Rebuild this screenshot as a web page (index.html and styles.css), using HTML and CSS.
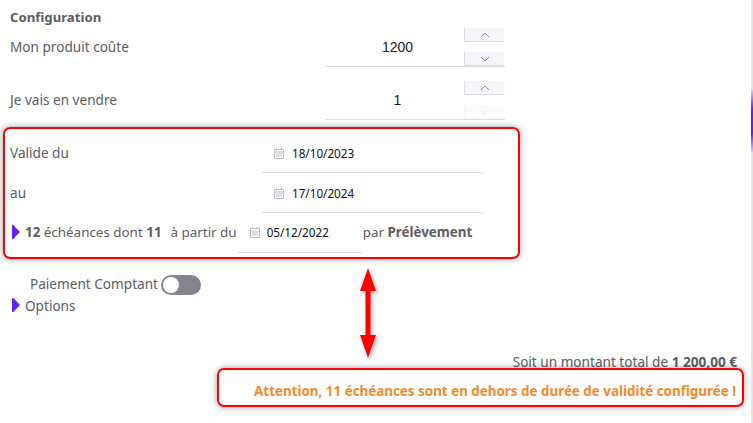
FILE: index.html
```html
<!DOCTYPE html>
<html lang="fr">
<head>
  <meta charset="utf-8">
  <title>Configuration</title>
  <link rel="stylesheet" href="styles.css">
</head>
<body>
  <div class="page">
    <h3 class="title">Configuration</h3>

    <!-- Quantities -->
    <div class="numRow">
      <label class="numLabel">Mon produit coûte</label>
      <div class="numField">
        <span class="numValue">1200</span>
        <div class="stepper">
          <span class="stepBtn"><svg width="10" height="6" viewBox="0 0 10 6"><path d="M1 5 L5 1 L9 5"/></svg></span>
          <span class="stepBtn"><svg width="10" height="6" viewBox="0 0 10 6"><path d="M1 1 L5 5 L9 1"/></svg></span>
        </div>
      </div>
    </div>
    <div class="numRow">
      <label class="numLabel">Je vais en vendre</label>
      <div class="numField">
        <span class="numValue">1</span>
        <div class="stepper">
          <span class="stepBtn"><svg width="10" height="6" viewBox="0 0 10 6"><path d="M1 5 L5 1 L9 5"/></svg></span>
          <span class="stepBtn disabled"><svg width="10" height="6" viewBox="0 0 10 6"><path d="M1 1 L5 5 L9 1"/></svg></span>
        </div>
      </div>
    </div>

    <!-- Dates -->
    <div class="redBox dates">
      <div class="dateRow">
        <label>Valide du</label>
        <div class="dateField">
          <svg class="cal" width="12" height="12" viewBox="0 0 12 12"><path d="M1.5 2.5h9v9h-9zM1.5 5h9M3.5 1v2M8.5 1v2M3 7h6M3 9h6"/></svg>
          <span>18/10/2023</span>
        </div>
      </div>
      <div class="dateRow">
        <label>au</label>
        <div class="dateField">
          <svg class="cal" width="12" height="12" viewBox="0 0 12 12"><path d="M1.5 2.5h9v9h-9zM1.5 5h9M3.5 1v2M8.5 1v2M3 7h6M3 9h6"/></svg>
          <span>17/10/2024</span>
        </div>
      </div>
      <div class="termRow">
        <span class="caret"></span>
        <span class="termText"><b>12</b> échéances dont <b>11</b></span>
        <span class="termFrom">à partir du</span>
        <div class="dateField small">
          <svg class="cal" width="12" height="12" viewBox="0 0 12 12"><path d="M1.5 2.5h9v9h-9zM1.5 5h9M3.5 1v2M8.5 1v2M3 7h6M3 9h6"/></svg>
          <span>05/12/2022</span>
        </div>
        <span class="termPay">par <b>Prélèvement</b></span>
      </div>
    </div>

    <div class="cashRow">
      <span class="cashLabel">Paiement Comptant</span>
      <span class="toggle"><span class="knob"></span></span>
    </div>
    <div class="optRow">
      <span class="caret"></span>
      <span>Options</span>
    </div>

    <div class="total">Soit un montant total de <b>1 200,00 €</b></div>
    <div class="redBox alert">Attention, 11 échéances sont en dehors de durée de validité configurée !</div>
  </div>

  <!-- annotation arrow -->
  <svg class="arrow" width="18" height="92" viewBox="0 0 18 92">
    <path d="M9 1 L17 24 H11.5 V68 H17 L9 91 L1 68 H6.5 V24 H1 Z"/>
  </svg>

  <div class="scrollEdge"><div class="scrollThumb"></div></div>
</body>
</html>
```

FILE: styles.css
```css
* {
  box-sizing: border-box;
}
body {
  margin: 0;
  background: #fff;
  color: #5e5c64;
  font-family: "Noto Sans", sans-serif;
  font-size: 13.6px;
  overflow: hidden;
}
b {
  font-weight: 700;
}
.page {
  display: flex;
  flex-direction: column;
  width: 753px;
  height: 423px;
  padding-top: 8px;
}
.title {
  margin: 0 0 0 10px;
  height: 19px;
  line-height: 18px;
  font-size: 13.2px;
  font-weight: 700;
}
.numRow {
  display: flex;
  justify-content: space-between;
  height: 40px;
  margin: 0 248px 0 10px;
}
.numRow + .numRow {
  margin-top: 13px;
}
.numLabel {
  line-height: 40px;
}
.numField {
  display: flex;
  width: 180px;
  border-bottom: 1px solid #dcdce4;
}
.numValue {
  flex: 1;
  text-align: center;
  line-height: 41px;
  padding-left: 6px;
  color: #222;
  font-family: "Liberation Sans", sans-serif;
  font-size: 14px;
}
.stepper {
  display: flex;
  flex-direction: column;
  justify-content: space-between;
  width: 40px;
  margin: 1px 1px 0 0;
}
.stepBtn {
  display: flex;
  align-items: center;
  justify-content: center;
  height: 14px;
  background: #f5f5fa;
  border-left: 1px solid #dcdce4;
  border-bottom: 1px solid #dcdce4;
  border-top-right-radius: 3px;
}
.stepBtn svg path {
  fill: none;
  stroke: #77757f;
  stroke-width: 0.8;
}
.stepBtn.disabled {
  background: #fbfbfd;
  border-color: #f4f4f8;
}
.stepBtn.disabled svg path {
  stroke: #e4e4ea;
}
.redBox {
  border: 2px solid #f00;
  border-radius: 7px;
  box-shadow: 0 0 6px rgba(0, 0, 0, 0.4);
}
.dates {
  width: 517px;
  height: 132px;
  margin: 7px 0 0 3px;
  padding: 6px 0 0 5px;
}
.dateRow {
  display: flex;
  justify-content: space-between;
  height: 40px;
  padding-right: 34px;
}
.dateRow label {
  line-height: 36px;
}
.dateField {
  display: flex;
  align-items: center;
  gap: 7px;
  width: 222px;
  height: 38px;
  padding: 0 0 2px 11px;
  border-bottom: 1px solid #dcdce4;
  color: #111;
  font-size: 11.7px;
}
.cal {
  flex: none;
}
.cal path {
  fill: none;
  stroke: #bcbcc8;
  stroke-width: 1;
}
.termRow {
  display: flex;
  align-items: flex-start;
  height: 40px;
}
.termRow > span {
  line-height: 34px;
  font-size: 13.4px;
}
.caret {
  flex: none;
  width: 8px;
  height: 14px;
  background: #6a1ff2;
  clip-path: polygon(0 0, 15% 0, 100% 50%, 15% 100%, 0 100%);
  align-self: center;
}
.termRow .caret {
  margin: 0 5px 6px 2px;
}
.termFrom {
  margin-left: 9px;
}
.small {
  width: 125px;
  margin-left: 1px;
  padding: 0 0 4px 11px;
  gap: 6px;
}
.cashRow {
  display: flex;
  align-items: center;
  gap: 3px;
  height: 20px;
  margin: 16px 0 0 30px;
}
.cashLabel {
  padding-bottom: 4px;
}
.toggle {
  display: flex;
  align-items: center;
  width: 40px;
  height: 20px;
  padding-left: 2px;
  border-radius: 10px;
  background: #85838f;
}
.knob {
  width: 16px;
  height: 16px;
  border-radius: 50%;
  background: #fff;
}
.optRow {
  display: flex;
  align-items: center;
  gap: 5px;
  height: 20px;
  margin: 0 0 0 12px;
}
.total {
  margin: 40px 16px 0 0;
  height: 14px;
  line-height: 14px;
  text-align: right;
}
.alert {
  width: 527px;
  height: 39px;
  margin: -1px 0 0 217px;
  padding-right: 6px;
  line-height: 43px;
  text-align: right;
  color: #f58a2c;
  font-weight: 700;
  font-size: 13.4px;
}
.arrow {
  position: absolute;
  left: 359px;
  top: 267px;
  filter: drop-shadow(2px 2px 2px rgba(0, 0, 0, 0.3));
}
.arrow path {
  fill: #f00;
}
.scrollEdge {
  position: absolute;
  top: 0;
  right: 0;
  width: 2px;
  height: 423px;
  background: #e4e4e4;
}
.scrollThumb {
  height: 62px;
  margin-top: 90px;
  background: linear-gradient(#d9c6f8, #6a1ff2 30%, #6a1ff2 70%, #d9c6f8);
}
```
